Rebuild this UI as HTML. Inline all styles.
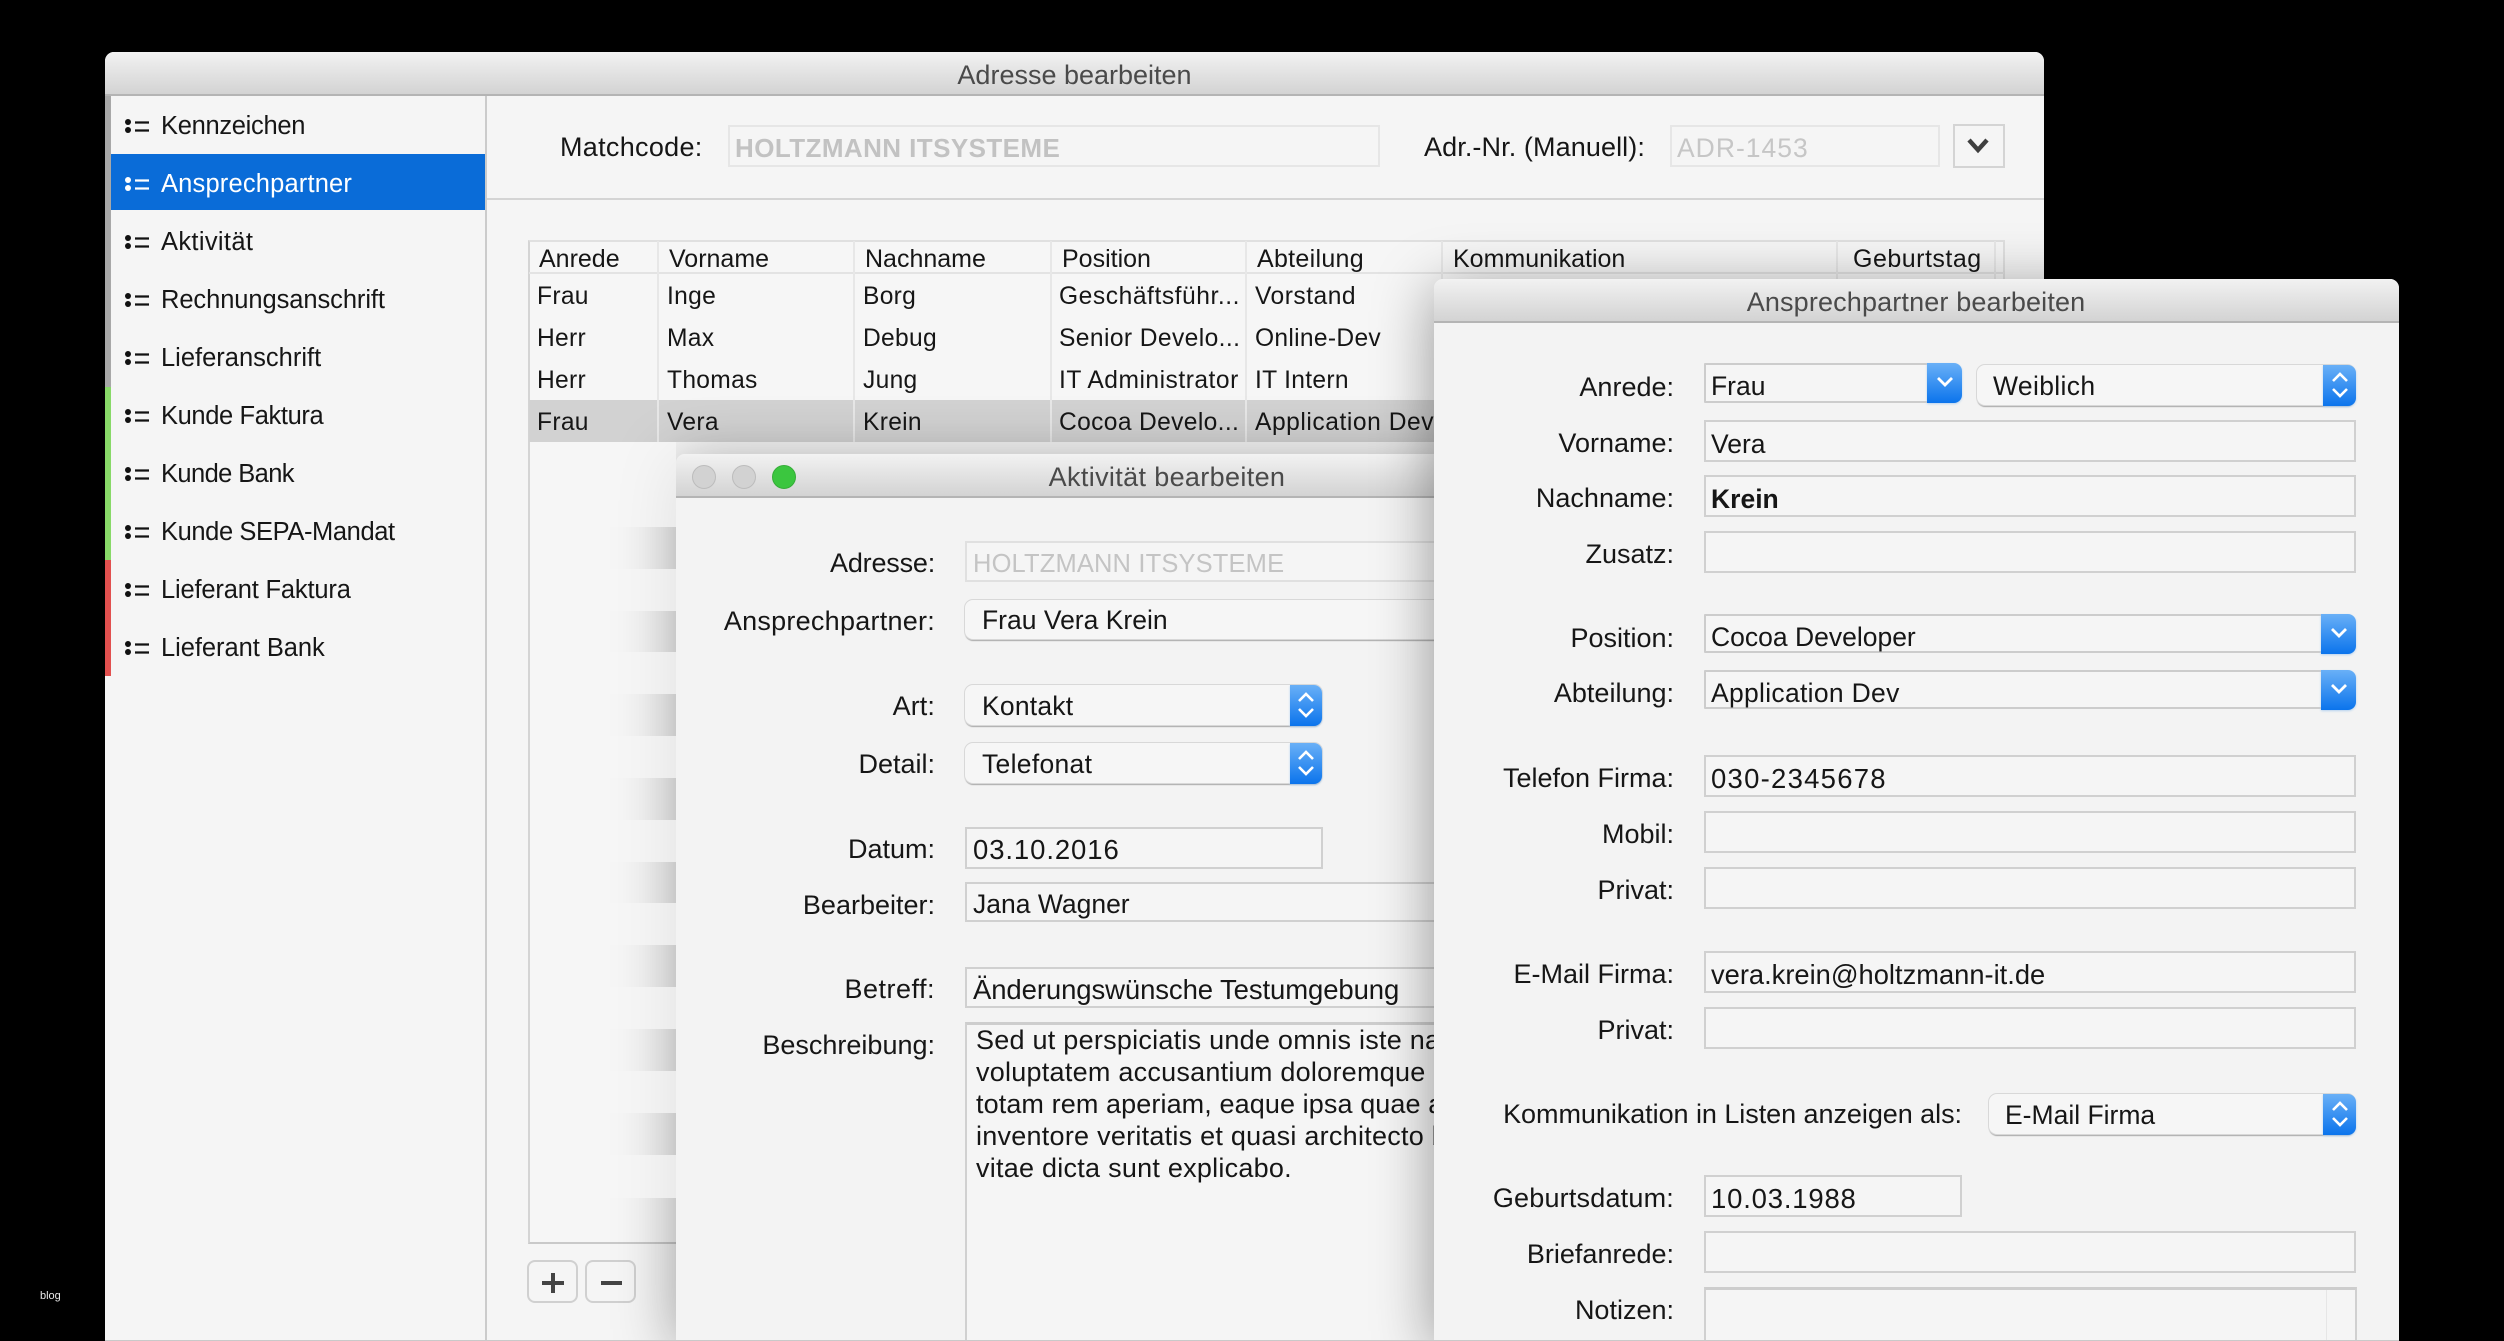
<!DOCTYPE html>
<html lang="de"><head><meta charset="utf-8"><title>Adresse bearbeiten</title>
<style>
html,body{margin:0;padding:0;background:#000;width:2504px;height:1341px;overflow:hidden}
#root{position:absolute;left:0;top:0;width:2504px;height:1341px;overflow:hidden;font-family:"Liberation Sans",sans-serif;font-size:27px;color:#161616}
#root div,#root svg{position:absolute}
.t{height:40px;line-height:40px;white-space:nowrap}
.l{text-align:right;left:0}
.s{font-size:25.5px}
.h{font-size:25px}
.c{font-size:24.6px;letter-spacing:.3px}
.ti{font-size:27px;color:#4a4a4a;text-align:center}
.bar{background:linear-gradient(#f2f2f2,#d3d3d3);border-bottom:2px solid #b4b4b4;box-sizing:border-box;border-radius:9px 9px 0 0}
.f{background:#f5f5f5;border:2px solid #d0d0d0;box-sizing:border-box}
.p{background:#f6f6f6;border-radius:8px;box-shadow:0 0 0 1px #d8d8d8,0 2px 1px #a8a8a8;box-sizing:border-box}
.cb{background:#f5f5f5;border:2px solid #cccccc;border-radius:1px;box-sizing:border-box}
.bl{background:linear-gradient(#69b0f7,#0b74ec);border-radius:0 8px 8px 0;box-shadow:0 1px 2px #b5d2ef}
.sep{background:#e7e7e7;width:2px}
.ic{width:26px;height:20px}
</style></head>
<body>
<div id="root">

<!-- main window -->
<div style="left:105px;top:52px;width:1939px;height:1289px;background:#f5f5f5;border-radius:9px 9px 0 0"></div>
<div class="bar" style="left:105px;top:52px;width:1939px;height:44px"></div>
<div class="t ti" style="left:105px;top:55px;width:1939px">Adresse bearbeiten</div>

<!-- sidebar -->
<div style="left:105px;top:96px;width:6px;height:291px;background:#a8a8a8"></div>
<div style="left:105px;top:387px;width:6px;height:173px;background:#88d968"></div>
<div style="left:105px;top:560px;width:6px;height:116px;background:#e2504f"></div>
<div style="left:485px;top:96px;width:2px;height:1245px;background:#cbcbcb"></div>
<div style="left:111px;top:154px;width:374px;height:56px;background:#0a6cd8"></div>

<svg class="ic" style="left:124px;top:116px" viewBox="0 0 26 20"><circle cx="4" cy="6" r="3" fill="#111"/><circle cx="4" cy="14" r="3" fill="#111"/><path d="M11 6.5h14M11 14.5h14" stroke="#111" stroke-width="2.2"/></svg>
<svg class="ic" style="left:124px;top:174px" viewBox="0 0 26 20"><circle cx="4" cy="6" r="3" fill="#fff"/><circle cx="4" cy="14" r="3" fill="#fff"/><path d="M11 6.5h14M11 14.5h14" stroke="#fff" stroke-width="2.2"/></svg>
<svg class="ic" style="left:124px;top:232px" viewBox="0 0 26 20"><circle cx="4" cy="6" r="3" fill="#111"/><circle cx="4" cy="14" r="3" fill="#111"/><path d="M11 6.5h14M11 14.5h14" stroke="#111" stroke-width="2.2"/></svg>
<svg class="ic" style="left:124px;top:290px" viewBox="0 0 26 20"><circle cx="4" cy="6" r="3" fill="#111"/><circle cx="4" cy="14" r="3" fill="#111"/><path d="M11 6.5h14M11 14.5h14" stroke="#111" stroke-width="2.2"/></svg>
<svg class="ic" style="left:124px;top:348px" viewBox="0 0 26 20"><circle cx="4" cy="6" r="3" fill="#111"/><circle cx="4" cy="14" r="3" fill="#111"/><path d="M11 6.5h14M11 14.5h14" stroke="#111" stroke-width="2.2"/></svg>
<svg class="ic" style="left:124px;top:406px" viewBox="0 0 26 20"><circle cx="4" cy="6" r="3" fill="#111"/><circle cx="4" cy="14" r="3" fill="#111"/><path d="M11 6.5h14M11 14.5h14" stroke="#111" stroke-width="2.2"/></svg>
<svg class="ic" style="left:124px;top:464px" viewBox="0 0 26 20"><circle cx="4" cy="6" r="3" fill="#111"/><circle cx="4" cy="14" r="3" fill="#111"/><path d="M11 6.5h14M11 14.5h14" stroke="#111" stroke-width="2.2"/></svg>
<svg class="ic" style="left:124px;top:522px" viewBox="0 0 26 20"><circle cx="4" cy="6" r="3" fill="#111"/><circle cx="4" cy="14" r="3" fill="#111"/><path d="M11 6.5h14M11 14.5h14" stroke="#111" stroke-width="2.2"/></svg>
<svg class="ic" style="left:124px;top:580px" viewBox="0 0 26 20"><circle cx="4" cy="6" r="3" fill="#111"/><circle cx="4" cy="14" r="3" fill="#111"/><path d="M11 6.5h14M11 14.5h14" stroke="#111" stroke-width="2.2"/></svg>
<svg class="ic" style="left:124px;top:638px" viewBox="0 0 26 20"><circle cx="4" cy="6" r="3" fill="#111"/><circle cx="4" cy="14" r="3" fill="#111"/><path d="M11 6.5h14M11 14.5h14" stroke="#111" stroke-width="2.2"/></svg>

<div class="t s" style="left:161px;top:106px;letter-spacing:-.3px">Kennzeichen</div>
<div class="t s" style="left:161px;top:164px;color:#fff;letter-spacing:.17px">Ansprechpartner</div>
<div class="t s" style="left:161px;top:222px;letter-spacing:.33px">Aktivität</div>
<div class="t s" style="left:161px;top:280px;letter-spacing:-.08px">Rechnungsanschrift</div>
<div class="t s" style="left:161px;top:338px">Lieferanschrift</div>
<div class="t s" style="left:161px;top:396px;letter-spacing:-.38px">Kunde Faktura</div>
<div class="t s" style="left:161px;top:454px;letter-spacing:-.6px">Kunde Bank</div>
<div class="t s" style="left:161px;top:512px;letter-spacing:-.4px">Kunde SEPA-Mandat</div>
<div class="t s" style="left:161px;top:570px;letter-spacing:-.18px">Lieferant Faktura</div>
<div class="t s" style="left:161px;top:628px;letter-spacing:-.05px">Lieferant Bank</div>

<!-- header row -->
<div class="t" style="left:560px;top:127px;letter-spacing:.3px">Matchcode:</div>
<div class="f" style="left:728px;top:125px;width:652px;height:42px;border-color:#e6e6e6"></div>
<div class="t" style="left:735px;top:128px;font-size:26px;font-weight:bold;color:#c2c2c2;letter-spacing:.42px">HOLTZMANN ITSYSTEME</div>
<div class="t" style="left:1424px;top:127px;letter-spacing:.1px">Adr.-Nr. (Manuell):</div>
<div class="f" style="left:1670px;top:125px;width:270px;height:42px;border-color:#e6e6e6"></div>
<div class="t" style="left:1677px;top:128px;font-size:26.5px;color:#c6c6c6;letter-spacing:1px">ADR-1453</div>
<div style="left:1953px;top:124px;width:52px;height:44px;background:#f5f5f5;border:2px solid #d4d4d4;box-sizing:border-box"></div>
<svg style="left:1966px;top:137px" width="24" height="18" viewBox="0 0 24 18"><path d="M3 3l9 10 9-10" fill="none" stroke="#3f3f3f" stroke-width="4.4"/></svg>
<div style="left:487px;top:198px;width:1557px;height:2px;background:#d4d4d4"></div>

<!-- table -->
<div style="left:528px;top:240px;width:1477px;height:1004px;background:#f6f6f6;border:2px solid #e0e0e0;border-bottom-color:#c9c9c9;border-left-color:#d4d4d4;box-sizing:border-box"></div>
<div style="left:529px;top:272px;width:1475px;height:2px;background:#e3e3e3"></div>
<div style="left:529px;top:400px;width:1000px;height:42px;background:#d2d2d2"></div>
<div class="sep" style="left:657px;top:241px;height:201px"></div>
<div class="sep" style="left:853px;top:241px;height:201px"></div>
<div class="sep" style="left:1050px;top:241px;height:201px"></div>
<div class="sep" style="left:1245px;top:241px;height:201px"></div>
<div class="sep" style="left:1441px;top:241px;height:201px"></div>
<div class="sep" style="left:1836px;top:241px;height:201px"></div>
<div class="sep" style="left:1994px;top:241px;height:201px"></div>

<div class="t h" style="left:539px;top:239px">Anrede</div>
<div class="t h" style="left:669px;top:239px">Vorname</div>
<div class="t h" style="left:865px;top:239px">Nachname</div>
<div class="t h" style="left:1062px;top:239px">Position</div>
<div class="t h" style="left:1257px;top:239px;letter-spacing:.3px">Abteilung</div>
<div class="t h" style="left:1453px;top:239px">Kommunikation</div>
<div class="t h" style="left:1853px;top:239px;letter-spacing:.5px">Geburtstag</div>

<div class="t c" style="left:537px;top:277px">Frau</div>
<div class="t c" style="left:667px;top:277px">Inge</div>
<div class="t c" style="left:863px;top:277px">Borg</div>
<div class="t c" style="left:1059px;top:277px;letter-spacing:.55px">Geschäftsführ...</div>
<div class="t c" style="left:1255px;top:277px;letter-spacing:.5px">Vorstand</div>
<div class="t c" style="left:537px;top:319px">Herr</div>
<div class="t c" style="left:667px;top:319px">Max</div>
<div class="t c" style="left:863px;top:319px">Debug</div>
<div class="t c" style="left:1059px;top:319px;letter-spacing:.4px">Senior Develo...</div>
<div class="t c" style="left:1255px;top:319px">Online-Dev</div>
<div class="t c" style="left:537px;top:361px">Herr</div>
<div class="t c" style="left:667px;top:361px">Thomas</div>
<div class="t c" style="left:863px;top:361px">Jung</div>
<div class="t c" style="left:1059px;top:361px;letter-spacing:.5px">IT Administrator</div>
<div class="t c" style="left:1255px;top:361px">IT Intern</div>
<div class="t c" style="left:537px;top:403px">Frau</div>
<div class="t c" style="left:667px;top:403px">Vera</div>
<div class="t c" style="left:863px;top:403px">Krein</div>
<div class="t c" style="left:1059px;top:403px;letter-spacing:.35px">Cocoa Develo...</div>
<div class="t c" style="left:1255px;top:403px;letter-spacing:.55px">Application Dev</div>

<!-- plus / minus -->
<div style="left:527px;top:1260px;width:51px;height:43px;border:2px solid #d0d0d0;border-radius:8px;box-sizing:border-box;background:#f5f5f5"></div>
<div style="left:585px;top:1260px;width:51px;height:43px;border:2px solid #d0d0d0;border-radius:8px;box-sizing:border-box;background:#f5f5f5"></div>
<div style="left:542px;top:1281px;width:22px;height:4px;background:#444"></div>
<div style="left:551px;top:1273px;width:4px;height:20px;background:#444"></div>
<div style="left:601px;top:1281px;width:21px;height:4px;background:#444"></div>

<!-- activity dialog -->
<div style="left:676px;top:454px;width:800px;height:887px;background:#f3f3f3;border-radius:9px 0 0 0;box-shadow:0 8px 60px rgba(0,0,0,.36)"></div>

<!-- zebra light stripes over dialog shadow -->
<div style="left:560px;top:442px;width:116px;height:85px;background:rgba(246,246,246,.75)"></div>
<div style="left:560px;top:569px;width:116px;height:42px;background:rgba(246,246,246,.75)"></div>
<div style="left:560px;top:652px;width:116px;height:42px;background:rgba(246,246,246,.75)"></div>
<div style="left:560px;top:736px;width:116px;height:42px;background:rgba(246,246,246,.75)"></div>
<div style="left:560px;top:820px;width:116px;height:42px;background:rgba(246,246,246,.75)"></div>
<div style="left:560px;top:903px;width:116px;height:42px;background:rgba(246,246,246,.75)"></div>
<div style="left:560px;top:987px;width:116px;height:42px;background:rgba(246,246,246,.75)"></div>
<div style="left:560px;top:1071px;width:116px;height:42px;background:rgba(246,246,246,.75)"></div>
<div style="left:560px;top:1155px;width:116px;height:43px;background:rgba(246,246,246,.75)"></div>

<div class="bar" style="left:676px;top:454px;width:800px;height:44px;border-radius:9px 0 0 0"></div>
<div style="left:692px;top:465px;width:24px;height:24px;border-radius:50%;background:#d2d2d2;border:1px solid #bcbcbc;box-sizing:border-box"></div>
<div style="left:732px;top:465px;width:24px;height:24px;border-radius:50%;background:#d2d2d2;border:1px solid #bcbcbc;box-sizing:border-box"></div>
<div style="left:772px;top:465px;width:24px;height:24px;border-radius:50%;background:#3bc63f;border:1px solid #35ad38;box-sizing:border-box"></div>
<div class="t ti" style="left:967px;top:457px;width:400px;letter-spacing:.35px">Aktivität bearbeiten</div>

<div class="t l" style="width:935px;top:543px;letter-spacing:-.2px">Adresse:</div>
<div class="f" style="left:965px;top:541px;width:600px;height:41px;border-color:#e0e0e0"></div>
<div class="t" style="left:973px;top:544px;font-size:25.5px;color:#c4c4c4;letter-spacing:.15px">HOLTZMANN ITSYSTEME</div>

<div class="t l" style="width:935px;top:601px;letter-spacing:.25px">Ansprechpartner:</div>
<div class="p" style="left:965px;top:600px;width:600px;height:39px"></div>
<div class="t" style="left:982px;top:600px;font-size:26.5px">Frau Vera Krein</div>

<div class="t l" style="width:935px;top:686px;letter-spacing:.1px">Art:</div>
<div class="p" style="left:965px;top:685px;width:357px;height:40px"></div>
<div class="bl" style="left:1290px;top:685px;width:32px;height:41px"></div>
<svg style="left:1295px;top:690px" width="22" height="30" viewBox="0 0 22 30"><path d="M4 11l7-7 7 7M4 19l7 7 7-7" fill="none" stroke="#fff" stroke-width="2.6"/></svg>
<div class="t" style="left:982px;top:686px;font-size:26.5px;letter-spacing:.2px">Kontakt</div>

<div class="t l" style="width:935px;top:744px">Detail:</div>
<div class="p" style="left:965px;top:743px;width:357px;height:40px"></div>
<div class="bl" style="left:1290px;top:743px;width:32px;height:41px"></div>
<svg style="left:1295px;top:748px" width="22" height="30" viewBox="0 0 22 30"><path d="M4 11l7-7 7 7M4 19l7 7 7-7" fill="none" stroke="#fff" stroke-width="2.6"/></svg>
<div class="t" style="left:982px;top:744px;font-size:26.5px;letter-spacing:.3px">Telefonat</div>

<div class="t l" style="width:935px;top:829px">Datum:</div>
<div class="f" style="left:965px;top:827px;width:358px;height:42px"></div>
<div class="t" style="left:973px;top:830px;font-size:27.5px;letter-spacing:.9px">03.10.2016</div>

<div class="t l" style="width:935px;top:885px">Bearbeiter:</div>
<div class="f" style="left:965px;top:882px;width:600px;height:40px"></div>
<div class="t" style="left:973px;top:884px;font-size:26.5px">Jana Wagner</div>

<div class="t l" style="width:935px;top:969px;letter-spacing:.5px">Betreff:</div>
<div class="f" style="left:965px;top:967px;width:600px;height:41px"></div>
<div class="t" style="left:973px;top:970px;font-size:27.5px;letter-spacing:-.1px">Änderungswünsche Testumgebung</div>

<div class="t l" style="width:935px;top:1025px">Beschreibung:</div>
<div class="f" style="left:965px;top:1022px;width:600px;height:319px;border-top:3px solid #cdcdcd;border-bottom:0"></div>
<div class="t" style="left:976px;top:1020px;font-size:27px;letter-spacing:.25px">Sed ut perspiciatis unde omnis iste natus error sit</div>
<div class="t" style="left:976px;top:1052px;font-size:27px;letter-spacing:.25px">voluptatem accusantium doloremque laudantium,</div>
<div class="t" style="left:976px;top:1084px;font-size:27px;letter-spacing:.1px">totam rem aperiam, eaque ipsa quae ab illo</div>
<div class="t" style="left:976px;top:1116px;font-size:27px;letter-spacing:.25px">inventore veritatis et quasi architecto beatae</div>
<div class="t" style="left:976px;top:1148px;font-size:27px;letter-spacing:.25px">vitae dicta sunt explicabo.</div>

<!-- contact dialog -->
<div style="left:1434px;top:279px;width:965px;height:1062px;background:#f3f3f3;border-radius:9px 9px 0 0;box-shadow:0 10px 60px rgba(0,0,0,.4)"></div>
<div class="bar" style="left:1434px;top:279px;width:965px;height:44px"></div>
<div class="t ti" style="left:1434px;top:282px;width:964px;letter-spacing:.15px">Ansprechpartner bearbeiten</div>

<div class="t l" style="width:1674px;top:367px">Anrede:</div>
<div class="cb" style="left:1704px;top:363px;width:240px;height:40px"></div>
<div class="bl" style="left:1927px;top:363px;width:35px;height:40px"></div>
<svg style="left:1934px;top:373px" width="22" height="18" viewBox="0 0 22 18"><path d="M4 5l7 7 7-7" fill="none" stroke="#fff" stroke-width="2.8"/></svg>
<div class="t" style="left:1711px;top:366px;font-size:26.5px">Frau</div>
<div class="p" style="left:1977px;top:365px;width:378px;height:40px"></div>
<div class="bl" style="left:2323px;top:365px;width:33px;height:41px"></div>
<svg style="left:2329px;top:370px" width="22" height="30" viewBox="0 0 22 30"><path d="M4 11l7-7 7 7M4 19l7 7 7-7" fill="none" stroke="#fff" stroke-width="2.6"/></svg>
<div class="t" style="left:1993px;top:366px;font-size:26.5px;letter-spacing:.35px">Weiblich</div>

<div class="t l" style="width:1674px;top:423px">Vorname:</div>
<div class="f" style="left:1704px;top:420px;width:652px;height:42px"></div>
<div class="t" style="left:1711px;top:424px;font-size:26.5px">Vera</div>

<div class="t l" style="width:1674px;top:478px">Nachname:</div>
<div class="f" style="left:1704px;top:475px;width:652px;height:42px"></div>
<div class="t" style="left:1711px;top:479px;font-size:26.5px;font-weight:bold">Krein</div>

<div class="t l" style="width:1674px;top:534px">Zusatz:</div>
<div class="f" style="left:1704px;top:531px;width:652px;height:42px"></div>

<div class="t l" style="width:1674px;top:618px">Position:</div>
<div class="cb" style="left:1704px;top:614px;width:630px;height:39px"></div>
<div class="bl" style="left:2321px;top:614px;width:35px;height:40px"></div>
<svg style="left:2328px;top:624px" width="22" height="18" viewBox="0 0 22 18"><path d="M4 5l7 7 7-7" fill="none" stroke="#fff" stroke-width="2.8"/></svg>
<div class="t" style="left:1711px;top:617px;font-size:26.5px">Cocoa Developer</div>

<div class="t l" style="width:1674px;top:673px">Abteilung:</div>
<div class="cb" style="left:1704px;top:670px;width:630px;height:39px"></div>
<div class="bl" style="left:2321px;top:670px;width:35px;height:40px"></div>
<svg style="left:2328px;top:680px" width="22" height="18" viewBox="0 0 22 18"><path d="M4 5l7 7 7-7" fill="none" stroke="#fff" stroke-width="2.8"/></svg>
<div class="t" style="left:1711px;top:673px;font-size:26.5px;letter-spacing:.3px">Application Dev</div>

<div class="t l" style="width:1674px;top:758px">Telefon Firma:</div>
<div class="f" style="left:1704px;top:755px;width:652px;height:42px"></div>
<div class="t" style="left:1711px;top:759px;font-size:27.5px;letter-spacing:1.25px">030-2345678</div>

<div class="t l" style="width:1674px;top:814px">Mobil:</div>
<div class="f" style="left:1704px;top:811px;width:652px;height:42px"></div>

<div class="t l" style="width:1674px;top:870px">Privat:</div>
<div class="f" style="left:1704px;top:867px;width:652px;height:42px"></div>

<div class="t l" style="width:1674px;top:954px">E-Mail Firma:</div>
<div class="f" style="left:1704px;top:951px;width:652px;height:42px"></div>
<div class="t" style="left:1711px;top:955px;font-size:27.3px">vera.krein@holtzmann-it.de</div>

<div class="t l" style="width:1674px;top:1010px">Privat:</div>
<div class="f" style="left:1704px;top:1007px;width:652px;height:42px"></div>

<div class="t l" style="width:1962px;top:1094px;letter-spacing:-.05px">Kommunikation in Listen anzeigen als:</div>
<div class="p" style="left:1989px;top:1094px;width:366px;height:40px"></div>
<div class="bl" style="left:2323px;top:1094px;width:33px;height:41px"></div>
<svg style="left:2329px;top:1099px" width="22" height="30" viewBox="0 0 22 30"><path d="M4 11l7-7 7 7M4 19l7 7 7-7" fill="none" stroke="#fff" stroke-width="2.6"/></svg>
<div class="t" style="left:2005px;top:1095px;font-size:26.5px">E-Mail Firma</div>

<div class="t l" style="width:1674px;top:1178px;letter-spacing:.2px">Geburtsdatum:</div>
<div class="f" style="left:1704px;top:1175px;width:258px;height:42px"></div>
<div class="t" style="left:1711px;top:1179px;font-size:27.5px;letter-spacing:.8px">10.03.1988</div>

<div class="t l" style="width:1674px;top:1234px">Briefanrede:</div>
<div class="f" style="left:1704px;top:1231px;width:652px;height:42px"></div>

<div class="t l" style="width:1674px;top:1290px">Notizen:</div>
<div class="f" style="left:1704px;top:1287px;width:653px;height:54px;border-top:3px solid #cdcdcd;border-bottom:0"></div>
<div style="left:2326px;top:1290px;width:1px;height:51px;background:#e6e6e6"></div>

<div style="left:105px;top:1340px;width:2294px;height:1px;background:#c9c9c9"></div>
<div style="left:40px;top:1288px;width:30px;height:16px;line-height:16px;font-size:11px;color:#e8e8e8">blog</div>
</div>
</body></html>
